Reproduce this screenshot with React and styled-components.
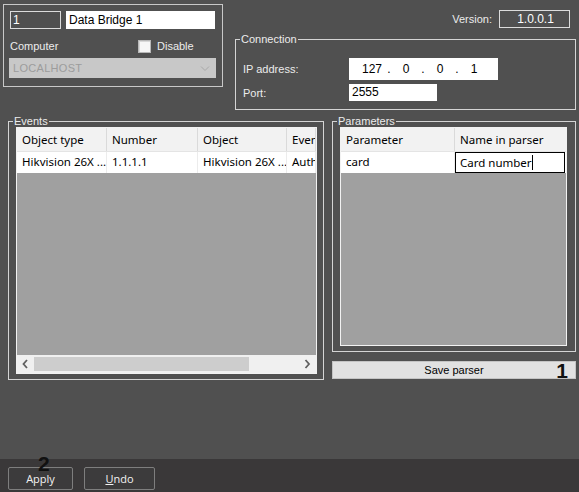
import React from 'react';
import styled, { createGlobalStyle } from 'styled-components';

const Global = createGlobalStyle`
    html, body {
        margin: 0;
        padding: 0;
        background: #505050;
    }
    body {
        font-family: "Liberation Sans", Arial, sans-serif;
        font-size: 11px;
        color: #ececec;
    }
    * { box-sizing: border-box; }
`;

const Page = styled.div`
    width: 579px;
    height: 492px;
    display: flex;
    flex-direction: column;
    overflow: hidden;
    background: #505050;
`;

const Main = styled.div`
    flex: 1;
    display: flex;
    flex-direction: column;
`;

const TopRow = styled.div`
    display: flex;
    align-items: flex-start;
`;

const IdentityBox = styled.div`
    margin: 4px 0 0 3px;
    width: 220px;
    height: 83px;
    border: 1px solid #c8c8c8;
    padding: 6px 7px 0 6px;
    display: flex;
    flex-direction: column;
`;

const IdRow = styled.div`
    display: flex;
    gap: 5px;
`;

const DarkField = styled.div`
    width: ${p => p.$w}px;
    height: 18px;
    border: 1px solid #dcdcdc;
    background: #505050;
    color: #fff;
    font-size: 12px;
    line-height: 16px;
    padding-left: 2px;
    text-align: ${p => p.$center ? 'center' : 'left'};
`;

const WhiteField = styled.div`
    width: ${p => p.$w}px;
    height: ${p => p.$h}px;
    background: #fff;
    color: #000;
    font-size: 12px;
    line-height: ${p => p.$h}px;
    padding-left: ${p => p.$pl || 3}px;
    white-space: nowrap;
`;

const ComputerRow = styled.div`
    display: flex;
    align-items: center;
    margin-top: 10px;
    height: 14px;
`;

const Label = styled.span`
    width: ${p => p.$w}px;
    flex-shrink: 0;
    color: #ececec;
`;

const CheckBox = styled.span`
    width: 13px;
    height: 13px;
    background: #f6f6f6;
    border: 1px solid #b8b8b8;
    box-shadow: inset 1px 1px 0 #d8d8d8;
    margin-right: 6px;
`;

const SelectBox = styled.div`
    margin: 5px 0 0 -1px;
    width: 207px;
    height: 20px;
    background: #c8c8c8;
    color: #9c9c9c;
    padding: 0 6px 0 4px;
    display: flex;
    align-items: center;
    justify-content: space-between;
    font-size: 11px;
    letter-spacing: 0.3px;
`;

const RightCol = styled.div`
    margin-left: ${p => p.$ml}px;
    width: ${p => p.$w}px;
    display: flex;
    flex-direction: column;
`;

const VersionRow = styled.div`
    display: flex;
    justify-content: flex-end;
    align-items: center;
    gap: 7px;
    margin-top: 10px;
    padding-right: 6px;
    height: 18px;
`;

const GroupBox = styled.fieldset`
    margin: ${p => p.$m || 0};
    padding: ${p => p.$pad};
    width: ${p => p.$w}px;
    height: ${p => p.$h}px;
    border: 1px solid #d4d4d4;
    min-width: 0;

    legend {
        padding: 0 1px;
        margin-left: -3px;
        font-size: 11px;
        line-height: 12px;
        color: #ececec;
    }
`;

const FormRow = styled.div`
    display: flex;
    align-items: center;
    margin-top: ${p => p.$mt || 0}px;
`;

const IpField = styled.div`
    width: 149px;
    height: 22px;
    background: #fff;
    color: #000;
    font-size: 12px;
    display: flex;
    align-items: center;
    padding-left: 10px;
`;

const IpPart = styled.span`
    width: ${p => p.$dot ? 8 : 26}px;
    text-align: center;
`;

const MidRow = styled.div`
    display: flex;
    align-items: flex-start;
    margin-top: 5px;
`;

const Table = styled.div`
    height: ${p => p.$h}px;
    border: 1px solid #f2f2f2;
    background: #a0a0a0;
    display: flex;
    flex-direction: column;
    overflow: hidden;
    font-family: "Noto Sans", "Open Sans", sans-serif;
    font-size: 11.5px;
    color: #000;
`;

const HeadRow = styled.div`
    display: flex;
    height: 24px;
    background: #f2f2f2;
    border-bottom: 1px solid #e4e4e4;
    flex-shrink: 0;
`;

const BodyRow = styled.div`
    display: flex;
    height: 21px;
    background: #fff;
    flex-shrink: 0;
`;

const Cell = styled.div`
    ${p => p.$w ? `width: ${p.$w}px; flex-shrink: 0;` : 'flex: 1; min-width: 0;'}
    padding-left: 5px;
    border-right: 1px solid ${p => p.$head ? '#dadada' : '#ececec'};
    line-height: ${p => p.$head ? 23 : 20}px;
    white-space: nowrap;
    overflow: hidden;
`;

const EditCell = styled.div`
    flex: 1;
    margin-right: 1px;
    border: 1px solid #000;
    padding-left: 4px;
    line-height: 19px;
    white-space: nowrap;
    display: flex;
    align-items: center;
`;

const Caret = styled.span`
    width: 1px;
    height: 15px;
    background: #000;
`;

const Spacer = styled.div`
    flex: 1;
`;

const HScroll = styled.div`
    height: 18px;
    background: #f0f0f0;
    display: flex;
    align-items: center;
    flex-shrink: 0;
`;

const ScrollArrow = styled.div`
    width: 17px;
    height: 100%;
    display: flex;
    align-items: center;
    justify-content: center;
    flex-shrink: 0;
`;

const Thumb = styled.div`
    width: 215px;
    height: 14px;
    background: #cdcdcd;
`;

const SaveButton = styled.div`
    position: relative;
    margin-top: 9px;
    height: 18px;
    background: #e1e1e1;
    border: 1px solid #c4c4c4;
    color: #000;
    text-align: center;
    line-height: 16px;
    font-size: 11px;
`;

const Marker = styled.span`
    position: absolute;
    font-family: "Liberation Sans", Arial, sans-serif;
    font-weight: bold;
    font-size: 21px;
    line-height: 1;
    color: #111;
    ${p => p.$css}
`;

const BottomBar = styled.div`
    height: 33px;
    background: #3a3839;
    display: flex;
    align-items: flex-start;
    gap: 11px;
    padding: 8px 0 0 8px;
`;

const BarButton = styled.div`
    position: relative;
    width: ${p => p.$w}px;
    height: 23px;
    border: 1px solid #7e7e7e;
    border-radius: 2px;
    background: #3c3b3c;
    color: #f2f2f2;
    font-family: "Open Sans", "Noto Sans", sans-serif;
    font-size: 11px;
    line-height: 21px;
    text-align: center;
`;

const Chevron = ({ dir = 'down', color = '#a8a8a8' }) => {
    const d = {
        down: 'M1 1.5 L5 5.5 L9 1.5',
        left: 'M5 1 L1.5 5 L5 9',
        right: 'M1.5 1 L5 5 L1.5 9'
    }[dir];
    const size = dir === 'down' ? [10, 7] : [7, 10];
    return (
        <svg width={size[0]} height={size[1]} viewBox={`0 0 ${size[0]} ${size[1]}`}>
            <path d={d} fill="none" stroke={color} strokeWidth={dir === 'down' ? 1 : 1.8} />
        </svg>
    );
};

function App() {
    return (
        <Page>
            <Global />
            <Main>
                <TopRow>
                    <IdentityBox>
                        <IdRow>
                            <DarkField $w={51}>1</DarkField>
                            <WhiteField $w={149} $h={18}>Data Bridge 1</WhiteField>
                        </IdRow>
                        <ComputerRow>
                            <Label $w={128}>Computer</Label>
                            <CheckBox />
                            <span>Disable</span>
                        </ComputerRow>
                        <SelectBox>
                            LOCALHOST
                            <Chevron />
                        </SelectBox>
                    </IdentityBox>

                    <RightCol $ml={12} $w={341}>
                        <VersionRow>
                            <span>Version:</span>
                            <DarkField $w={71} $center>1.0.0.1</DarkField>
                        </VersionRow>
                        <GroupBox $m="5px 0 0 0" $pad="13px 7px 0 7px" $w={341} $h={77}>
                            <legend>Connection</legend>
                            <FormRow>
                                <Label $w={106}>IP address:</Label>
                                <IpField>
                                    <IpPart>127</IpPart>
                                    <IpPart $dot>.</IpPart>
                                    <IpPart>0</IpPart>
                                    <IpPart $dot>.</IpPart>
                                    <IpPart>0</IpPart>
                                    <IpPart $dot>.</IpPart>
                                    <IpPart>1</IpPart>
                                </IpField>
                            </FormRow>
                            <FormRow $mt={4}>
                                <Label $w={106}>Port:</Label>
                                <WhiteField $w={88} $h={17} $pl={3}>2555</WhiteField>
                            </FormRow>
                        </GroupBox>
                    </RightCol>
                </TopRow>

                <MidRow>
                    <GroupBox $m="0 0 0 8px" $pad="0 6px 5px 7px" $w={316} $h={265}>
                        <legend>Events</legend>
                        <Table $h={247}>
                            <HeadRow>
                                <Cell $head $w={90}>Object type</Cell>
                                <Cell $head $w={91}>Number</Cell>
                                <Cell $head $w={89}>Object</Cell>
                                <Cell $head>Event</Cell>
                            </HeadRow>
                            <BodyRow>
                                <Cell $w={90}>Hikvision 26X ...</Cell>
                                <Cell $w={91}>1.1.1.1</Cell>
                                <Cell $w={89}>Hikvision 26X ...</Cell>
                                <Cell>Auth</Cell>
                            </BodyRow>
                            <Spacer />
                            <HScroll>
                                <ScrollArrow><Chevron dir="left" color="#606060" /></ScrollArrow>
                                <Thumb />
                                <Spacer />
                                <ScrollArrow><Chevron dir="right" color="#606060" /></ScrollArrow>
                            </HScroll>
                        </Table>
                    </GroupBox>

                    <RightCol $ml={8} $w={244}>
                        <GroupBox $pad="0 8px 5px 7px" $w={244} $h={237}>
                            <legend>Parameters</legend>
                            <Table $h={219}>
                                <HeadRow>
                                    <Cell $head $w={114}>Parameter</Cell>
                                    <Cell $head $w={112}>Name in parser</Cell>
                                </HeadRow>
                                <BodyRow>
                                    <Cell $w={114}>card</Cell>
                                    <EditCell>Card number<Caret /></EditCell>
                                </BodyRow>
                            </Table>
                        </GroupBox>
                        <SaveButton>
                            Save parser
                            <Marker $css="right: 7px; top: 50%; transform: translateY(-50%);">1</Marker>
                        </SaveButton>
                    </RightCol>
                </MidRow>
            </Main>

            <BottomBar>
                <BarButton $w={65}>
                    Apply
                    <Marker $css="left: 29px; top: -15px;">2</Marker>
                </BarButton>
                <BarButton $w={71}><u>U</u>ndo</BarButton>
            </BottomBar>
        </Page>
    );
}

export default App;
